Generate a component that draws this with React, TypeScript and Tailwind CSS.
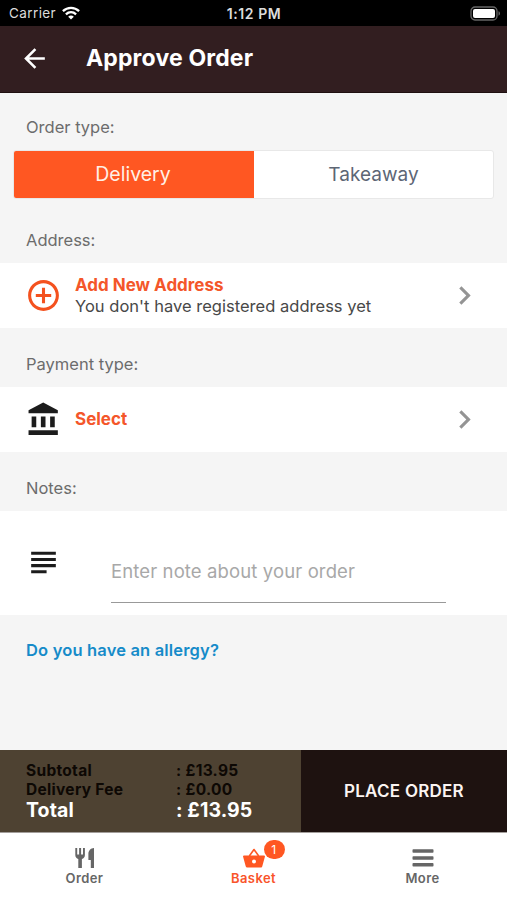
import type { ReactNode } from 'react';
import { MdAddCircleOutline, MdArrowBack, MdChevronRight, MdSubject } from 'react-icons/md';

interface SectionTitleProps {
  className: string;
  children: ReactNode;
}

const totals = [
  { label: 'Subtotal', value: '£13.95' },
  { label: 'Delivery Fee', value: '£0.00' },
];

function StatusBar() {
  return (
    <div className="grid grid-cols-3 items-center h-[26px] bg-black pl-[9px] pr-[6px] text-[13.5px] text-[#dcdcdc]">
      <div className="flex items-center gap-[6px]">
        <span className="tracking-[0.4px]">Carrier</span>
        <svg className="w-[18px] h-[14px]" viewBox="0 0 18 14" fill="none" stroke="white" strokeWidth="2.3">
          <path d="M0.9 5.2C5.6 0.7 12.4 0.7 17.1 5.2" />
          <path d="M3.9 8.3C6.9 5.5 11.1 5.5 14.1 8.3" />
          <path d="M9 13.6L6.2 10.7C7.8 9.2 10.2 9.2 11.8 10.7Z" fill="white" stroke="none" />
        </svg>
      </div>
      <span className="text-center font-semibold pr-[2px] pt-px text-[14px] tracking-[0.6px] whitespace-nowrap">
        1:12 PM
      </span>
      <svg className="justify-self-end w-[31px] h-[15px]" viewBox="0 0 31 15">
        <rect x="1" y="1" width="26" height="13" rx="4" fill="black" stroke="#666" strokeWidth="1.3" />
        <rect x="3" y="3" width="22" height="9" rx="2" fill="white" />
        <path d="M28.5 5.3C30.5 6 30.5 9 28.5 9.7Z" fill="#666" />
      </svg>
    </div>
  );
}

function SectionTitle({ className, children }: SectionTitleProps) {
  return (
    <h2 className={`flex items-center pl-[26px] text-[16.5px] text-[#6c6c6c] ${className}`}>
      {children}
    </h2>
  );
}

function BankIcon() {
  return (
    <svg className="w-[37px] h-[37px] text-[#1c1c1c]" viewBox="-0.3 0 24 24" fill="currentColor">
      <path d="M4 10v7h3v-7H4zm6 0v7h3v-7h-3zM2 22h19v-3H2v3zm14-12v7h3v-7h-3zm-4.500-9L2 6v2h19V6l-9.500-5z" />
    </svg>
  );
}

function ForkKnifeIcon() {
  return (
    <svg className="w-[20px] h-[20px]" viewBox="0 0 20 20" fill="currentColor">
      <path d="M0.300 0h1.900v6.500h1.900V0h2v6.500H8V0h1.900v7C9.900 9 8.700 10.500 6.900 11V20H3.300V11C1.500 10.500 0.300 9 0.300 7Z" />
      <path d="M19 0V20H15.800V12H13.400V6C13.400 2.500 15.700 0.300 19 0Z" />
    </svg>
  );
}

function BasketIcon() {
  return (
    <svg className="w-[22px] h-[20px]" viewBox="0 0 22 20" fill="currentColor">
      <path d="M6.300 8L11 1.500L15.700 8" fill="none" stroke="currentColor" strokeWidth="1.600" strokeLinejoin="round" />
      <path
        fillRule="evenodd"
        d="M1 7.500H21C21.800 7.500 22.100 8 21.900 8.700L19.300 18.300C19.100 19.100 18.600 19.500 17.800 19.500H4.200C3.400 19.500 2.900 19.100 2.700 18.300L0.100 8.700C-0.100 8 0.200 7.500 1 7.500ZM11 11.500A2 2 0 1 0 11 15.500A2 2 0 1 0 11 11.500Z"
      />
    </svg>
  );
}

function MenuIcon() {
  return (
    <svg className="w-[22px] h-[20px]" viewBox="0 0 22 20" fill="currentColor">
      <rect x="0.5" y="1.3" width="21" height="3.5" rx="0.8" />
      <rect x="0.5" y="8.2" width="21" height="3.5" rx="0.8" />
      <rect x="0.5" y="15.1" width="21" height="3.5" rx="0.8" />
    </svg>
  );
}

export default function App() {
  return (
    <div className="flex flex-col w-full h-[900px] overflow-hidden bg-[#f5f5f5] font-['Inter','Liberation_Sans',sans-serif]">
      <StatusBar />

      {/* Header */}
      <header className="flex items-center h-[67px] bg-[#321e20] pl-[19px] pb-px border-b border-[#1f1011] text-white">
        <MdArrowBack className="w-[31px] h-[31px]" />
        <h1 className="ml-[36px] text-[23px] tracking-[0.15px] font-bold">Approve Order</h1>
      </header>

      {/* Order type */}
      <SectionTitle className="h-[57px] pt-[11px]">Order type:</SectionTitle>
      <div className="flex h-[49px] mx-[13px] rounded-[3px] border border-[#e8e8e8] bg-white overflow-hidden text-[19.5px]">
        <button className="w-[240px] bg-[#ff5722] pr-[2px] text-[#fff0e6]">Delivery</button>
        <button className="flex-1 pt-[2px] text-[19px] tracking-[0.05px] text-[#5d6675]">Takeaway</button>
      </div>

      {/* Address */}
      <SectionTitle className="h-[64px] pt-[18px]">Address:</SectionTitle>
      <div className="flex items-center h-[65px] bg-white pl-[25px] pr-[24px]">
        <MdAddCircleOutline className="w-[37px] h-[37px] text-[#f4511e]" />
        <div className="flex-1 ml-[13px] leading-[21px] whitespace-nowrap">
          <p className="text-[17px] font-bold text-[#f4562a]">Add New Address</p>
          <p className="text-[16.5px] tracking-[0.02px] text-[#484848]">You don't have registered address yet</p>
        </div>
        <MdChevronRight className="w-[37px] h-[37px] text-[#949494]" />
      </div>

      {/* Payment */}
      <SectionTitle className="h-[59px] pt-[13px]">Payment type:</SectionTitle>
      <div className="flex items-center h-[65px] bg-white pl-[25px] pr-[24px]">
        <BankIcon />
        <p className="flex-1 ml-[13px] text-[17px] font-bold text-[#f4562a]">Select</p>
        <MdChevronRight className="w-[37px] h-[37px] text-[#949494]" />
      </div>

      {/* Notes */}
      <SectionTitle className="h-[59px] pt-[13px]">Notes:</SectionTitle>
      <div className="flex h-[104px] bg-white pl-[25px] pt-[33px]">
        <MdSubject className="w-[37px] h-[37px] text-[#1c1c1c]" />
        <input
          className="ml-[49px] w-[335px] h-[59px] pb-[5px] border-b border-[#999] text-[18.5px] tracking-[0.12px] placeholder:text-[#a8a8a8] outline-none"
          placeholder="Enter note about your order"
        />
      </div>
      <a className="pl-[26px] pt-[24px] text-[16.5px] leading-[22px] tracking-[0.17px] font-semibold text-[#168bc9]">
        Do you have an allergy?
      </a>

      {/* Totals */}
      <div className="mt-auto flex h-[83px] border-b border-[#a39e9b]">
        <div className="w-[301px] bg-[#4e4232] pl-[26px] pt-[11px] font-bold text-[15.5px] leading-[19px] tracking-[0.3px] text-[#0d0804]">
          {totals.map((row) => (
            <div key={row.label} className="flex">
              <span className="w-[150px]">{row.label}</span>
              <span>: {row.value}</span>
            </div>
          ))}
          <div className="flex text-[19.5px] leading-[23px] tracking-[0.1px] text-white">
            <span className="w-[150px]">Total</span>
            <span>: £13.95</span>
          </div>
        </div>
        <button className="flex-1 pt-[2px] bg-[#1e1210] text-[17px] tracking-[0.25px] font-semibold text-[#fbf4f2]">
          PLACE ORDER
        </button>
      </div>

      {/* Bottom navigation */}
      <nav className="grid grid-cols-3 h-[67px] bg-white text-[13px] font-semibold tracking-[0.4px] text-[#666]">
        <div className="flex flex-col items-center pt-[15px]">
          <ForkKnifeIcon />
          <span className="mt-px leading-[18px]">Order</span>
        </div>
        <div className="flex flex-col items-center pt-[15px] text-[#f9542a]">
          <div className="relative text-[#ff5722]">
            <BasketIcon />
            <span className="absolute left-[21px] -top-[8px] flex items-center justify-center w-[21px] h-[19px] rounded-full bg-[#ff5722] text-[12px] font-normal text-white">
              1
            </span>
          </div>
          <span className="mt-px leading-[18px]">Basket</span>
        </div>
        <div className="flex flex-col items-center pt-[15px]">
          <MenuIcon />
          <span className="mt-px leading-[18px]">More</span>
        </div>
      </nav>
    </div>
  );
}
